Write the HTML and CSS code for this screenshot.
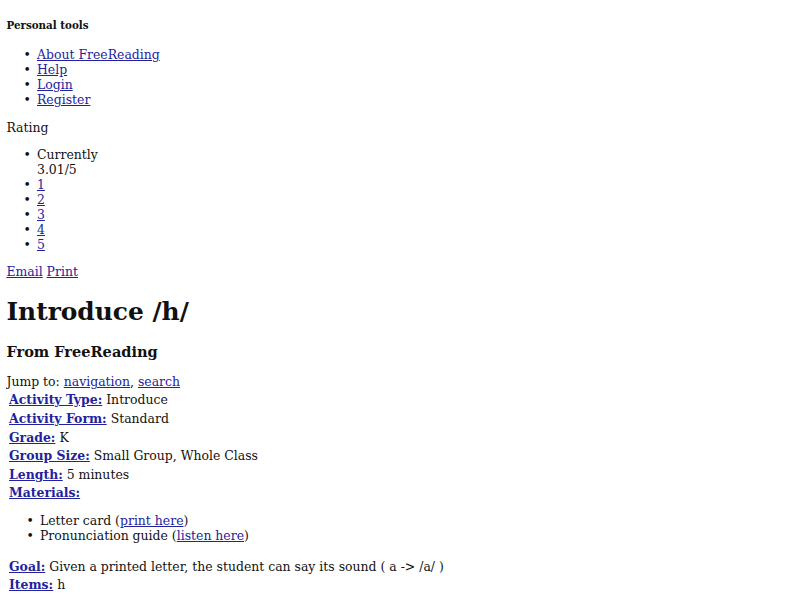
FILE: index.html
```html
<!DOCTYPE html>
<html>
<head>
<meta charset="utf-8">
<title>Introduce /h/ - FreeReading</title>
<link rel="stylesheet" href="styles.css">
</head>
<body class="page">
<h5 class="tools-title">Personal tools</h5>
<ul class="list">
  <li><a href="#">About FreeReading</a></li>
  <li><a href="#">Help</a></li>
  <li><a href="#">Login</a></li>
  <li><a href="#">Register</a></li>
</ul>
<div class="rating-label">Rating</div>
<ul class="list">
  <li>Currently<br>3.01/5</li>
  <li><a href="#">1</a></li>
  <li><a href="#">2</a></li>
  <li><a href="#">3</a></li>
  <li><a href="#">4</a></li>
  <li><a href="#">5</a></li>
</ul>
<div class="actions"><a href="#">Email</a> <a href="#">Print</a></div>
<h1 class="title">Introduce /h/</h1>
<h3 class="subtitle">From FreeReading</h3>
<div class="jump">Jump to: <a href="#">navigation</a>, <a href="#">search</a></div>
<table class="info">
  <tr><td><a class="key" href="#">Activity Type:</a> Introduce</td></tr>
  <tr><td><a class="key" href="#">Activity Form:</a> Standard</td></tr>
  <tr><td><a class="key" href="#">Grade:</a> K</td></tr>
  <tr><td><a class="key" href="#">Group Size:</a> Small Group, Whole Class</td></tr>
  <tr><td><a class="key" href="#">Length:</a> 5 minutes</td></tr>
  <tr><td><a class="key" href="#">Materials:</a>
    <ul class="list">
      <li>Letter card (<a href="#">print here</a>)</li>
      <li>Pronunciation guide (<a href="#">listen here</a>)</li>
    </ul>
  </td></tr>
  <tr><td><a class="key" href="#">Goal:</a> Given a printed letter, the student can say its sound ( a -&gt; /a/ )</td></tr>
  <tr><td><a class="key" href="#">Items:</a> h</td></tr>
</table>
</body>
</html>
```
FILE: styles.css
```css
html {
  background: #ffffff;
}
.page {
  margin: 0 6.4px 6.4px;
  padding-top: 1.5px;
  font-family: "DejaVu Serif", serif;
  font-size: 12.45px;
  line-height: 1.2;
  color: #111111;
}
a {
  color: #22229e;
  text-decoration: underline;
}
.tools-title {
  font-size: 0.83em;
  font-weight: bold;
  margin: 1.67em 0;
}
.list {
  margin: 1em 0;
  padding-left: 30.6px;
  list-style: disc;
}
.list li::marker {
  content: "\2022\2002";
}
.title {
  font-size: 2em;
  font-weight: bold;
  margin: 0.67em 0;
}
.subtitle {
  font-size: 1.17em;
  font-weight: bold;
  margin: 1em 0;
}
.info {
  border-collapse: separate;
  border-spacing: 2px 3px;
}
.info td {
  padding: 0.33px 0.6px;
  vertical-align: top;
}
.info .list {
  padding-left: 31px;
}
.key {
  font-weight: bold;
}
```
